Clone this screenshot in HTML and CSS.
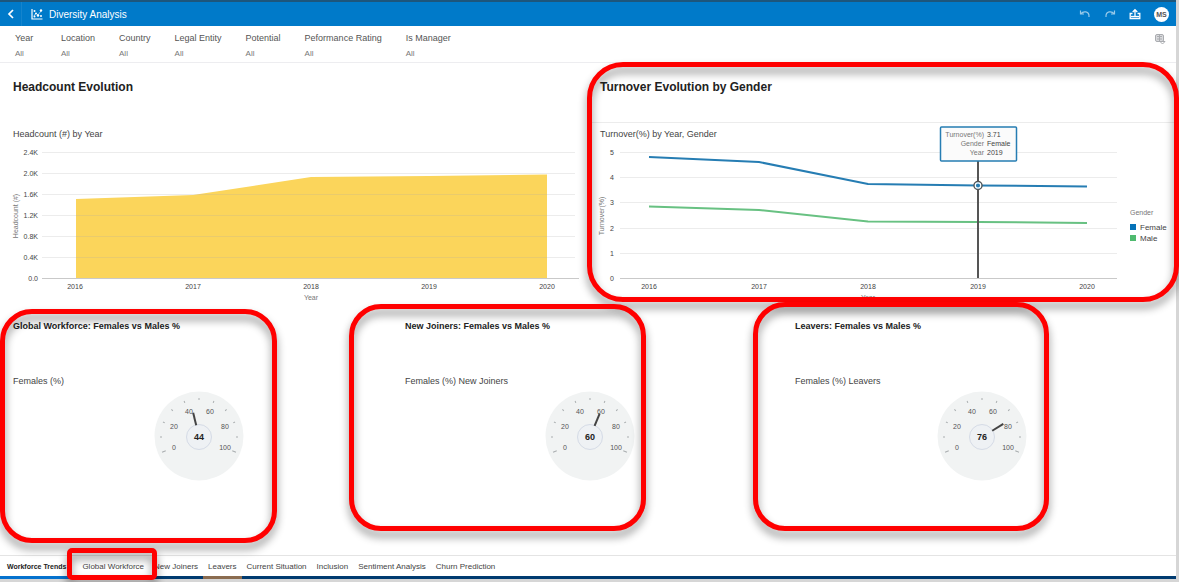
FILE: index.html
```html
<!DOCTYPE html>
<html lang="en">
<head>
<meta charset="utf-8">
<title>Diversity Analysis</title>
<link rel="stylesheet" href="styles.css">
</head>
<body>
<div class="app">
  <header class="topbar">
    <button class="icon-btn back" aria-label="Back">
      <svg width="8" height="10" viewBox="0 0 8 10" fill="none" stroke="#fff" stroke-width="1.7"><path d="M6 1 2 5l4 4"/></svg>
    </button>
    <svg class="logo" width="12" height="12" viewBox="0 0 12 12" fill="none" stroke="#fff" aria-hidden="true">
      <path d="M1 1v10h10.500" stroke-width="1.200"/><path d="m3 8 2-3 2 2 3-4" stroke-width=".6"/>
      <g fill="#fff" stroke="none"><circle cx="3.500" cy="3" r="1"/><circle cx="5" cy="5.500" r="1"/><circle cx="7" cy="7.500" r="1.200"/><circle cx="10" cy="2.500" r="1.200"/><circle cx="10" cy="8" r="1"/><circle cx="3.500" cy="8.500" r="1"/></g>
    </svg>
    <h1>Diversity Analysis</h1>
    <div class="actions">
      <button class="icon-btn dim" aria-label="Undo"><svg width="12" height="10" viewBox="0 0 12 10" fill="none" stroke="#fff" stroke-width="1.200"><path d="M1.500 1.500v3.500H5M1.800 4.800C4 2 10.500 1.500 10 8"/></svg></button>
      <button class="icon-btn dim" aria-label="Redo"><svg width="12" height="10" viewBox="0 0 12 10" fill="none" stroke="#fff" stroke-width="1.200"><path d="M10.500 1.500v3.500H7M10.200 4.800C8 2 1.500 1.500 2 8"/></svg></button>
      <button class="icon-btn" aria-label="Export"><svg width="12" height="12" viewBox="0 0 12 12" fill="none" stroke="#fff" stroke-width="1.300"><path d="M3.500 5.500H1.200v5h9.600v-5H8.500M6 8V2M3.700 4 6 1.700 8.300 4"/><path d="M2 8.500h8"/></svg></button>
      <button class="avatar" aria-label="Account">MS</button>
    </div>
  </header>

  <section class="filters" aria-label="Filters">
    <button class="filter">Year<span>All</span></button>
    <button class="filter">Location<span>All</span></button>
    <button class="filter">Country<span>All</span></button>
    <button class="filter">Legal Entity<span>All</span></button>
    <button class="filter">Potential<span>All</span></button>
    <button class="filter">Peformance Rating<span>All</span></button>
    <button class="filter">Is Manager<span>All</span></button>
    <button class="icon-btn filter-menu" aria-label="Filter options">
      <svg width="12" height="12" viewBox="0 0 12 12" fill="none" stroke="#aaacb0"><rect x="1.500" y="1.500" width="8" height="7" rx="1.500" fill="#d9dadd"/><path d="M3 3.500h5M3 6h5M5.500 2v6M6 8.500h5L8.500 11z"/></svg>
    </button>
  </section>

  <main>
    <div class="charts">
      <section class="panel">
        <h2>Headcount Evolution</h2>
        <h3 class="sub">Headcount (#) by Year</h3>
        <svg class="chart" viewBox="0 0 587 161" role="img" aria-label="Headcount by year">
          <path d="M76 135V55l117-4 118-18 118-1 118-1.500V135z" fill="#fbd55b"/>
          <path class="grid" d="M42 8.500h533M42 29.500h533M42 50.500h533M42 71.500h533M42 92.500h533M42 113.500h533"/>
          <path class="axis" d="M42 134.500h537"/>
          <g class="tick end">
            <text x="38" y="11">2.4K</text><text x="38" y="32">2.0K</text><text x="38" y="53">1.6K</text><text x="38" y="74">1.2K</text><text x="38" y="95">0.8K</text><text x="38" y="116">0.4K</text><text x="38" y="137">0.0</text>
          </g>
          <g class="tick">
            <text x="75" y="145">2016</text><text x="193" y="145">2017</text><text x="311" y="145">2018</text><text x="429" y="145">2019</text><text x="547" y="145">2020</text>
          </g>
          <g class="tick light"><text x="311" y="156">Year</text><text transform="translate(18 72) rotate(-90)">Headcount (#)</text></g>
        </svg>
      </section>

      <section class="panel ruled">
        <h2>Turnover Evolution by Gender</h2>
        <h3 class="sub">Turnover(%) by Year, Gender</h3>
        <svg class="chart" viewBox="0 0 589 161" role="img" aria-label="Turnover by year and gender">
          <path class="grid" d="M33 8.500h497M33 33.500h497M33 58.500h497M33 84.500h497M33 109.500h497"/>
          <path class="axis" d="M33 134.500h497"/>
          <path d="m62 62.500 110 3.500 109 11.500 110 .5 109 1" fill="none" stroke="#68c182" stroke-width="2"/>
          <path d="m62 13 110 5 109 22 110 1.500 109 1" fill="none" stroke="#267db3" stroke-width="2"/>
          <path d="M391 17v117" stroke="#555" stroke-width="2"/>
          <circle cx="391" cy="41.500" r="4" fill="#267db3" stroke="#555" stroke-width="1.500"/>
          <circle cx="391" cy="41.500" r="2.700" fill="#267db3" stroke="#fff" stroke-width="1.200"/>
          <rect x="353.500" y="-17" width="76" height="34" rx="1" fill="#fbfbfb" stroke="#267db3" stroke-width="1.500"/>
          <g class="tick end light"><text x="397" y="-7">Turnover(%)</text><text x="397" y="2">Gender</text><text x="397" y="11">Year</text></g>
          <g class="tick start"><text x="400" y="-7">3.71</text><text x="400" y="2">Female</text><text x="400" y="11">2019</text></g>
          <g class="tick end">
            <text x="27" y="11">5</text><text x="27" y="36">4</text><text x="27" y="61">3</text><text x="27" y="87">2</text><text x="27" y="112">1</text><text x="27" y="137">0</text>
          </g>
          <g class="tick">
            <text x="62" y="145">2016</text><text x="172" y="145">2017</text><text x="281" y="145">2018</text><text x="391" y="145">2019</text><text x="500" y="145">2020</text>
          </g>
          <g class="tick light"><text x="281" y="156">Year</text><text transform="translate(17 72) rotate(-90)">Turnover(%)</text></g>
          <rect x="543" y="80" width="6" height="6" fill="#0572b8"/><rect x="543" y="91" width="6" height="6" fill="#4fba6f"/>
          <g class="tick start light"><text x="543" y="71">Gender</text></g>
          <g class="legend"><text x="553" y="86">Female</text><text x="553" y="97">Male</text></g>
        </svg>
        <div class="mark mark-turnover"></div>
      </section>
    </div>

    <div class="gauges">
      <section class="panel">
        <h2 class="small">Global Workforce: Females vs Males %</h2>
        <h3 class="sub">Females (%)</h3>
        <svg class="gauge" width="90" height="90" viewBox="0 0 90 90" role="img" aria-label="44 percent">
          <g id="dial">
            <circle cx="45" cy="45" r="44.500" fill="#f1f3f3"/>
            <g stroke="#a9adaf">
              <path d="M45 6v4" transform="rotate(-112.500 45 46)"/>
              <path d="M45 7v2" transform="rotate(-90 45 46)"/>
              <path d="M45 7v2" transform="rotate(-67.500 45 46)"/>
              <path d="M45 7v2" transform="rotate(-45 45 46)"/>
              <path d="M45 7v2" transform="rotate(-22.500 45 46)"/>
              <path d="M45 7v2"/>
              <path d="M45 7v2" transform="rotate(22.500 45 46)"/>
              <path d="M45 7v2" transform="rotate(45 45 46)"/>
              <path d="M45 7v2" transform="rotate(67.500 45 46)"/>
              <path d="M45 7v2" transform="rotate(90 45 46)"/>
              <path d="M45 6v4" transform="rotate(112.500 45 46)"/>
            </g>
            <circle cx="45" cy="46" r="12.500" fill="#eef1f4" stroke="#d5dbe6"/>
            <g class="dial-label">
              <text x="20" y="59">0</text>
              <text x="20" y="38">20</text>
              <text x="35" y="23">40</text>
              <text x="56" y="23">60</text>
              <text x="71" y="38">80</text>
              <text x="71" y="59">100</text>
            </g>
          </g>
          <path class="needle" d="M45 34V21" transform="rotate(-13.500 45 46)"/>
          <text class="value" x="45" y="49">44</text>
        </svg>
        <div class="mark mark-workforce"></div>
      </section>
      <section class="panel">
        <h2 class="small">New Joiners: Females vs Males %</h2>
        <h3 class="sub">Females (%) New Joiners</h3>
        <svg class="gauge" width="90" height="90" viewBox="0 0 90 90" role="img" aria-label="60 percent">
          <use href="#dial"/>
          <path class="needle" d="M45 34V21" transform="rotate(22.500 45 46)"/>
          <text class="value" x="45" y="49">60</text>
        </svg>
        <div class="mark mark-joiners"></div>
      </section>
      <section class="panel">
        <h2 class="small">Leavers: Females vs Males %</h2>
        <h3 class="sub">Females (%) Leavers</h3>
        <svg class="gauge" width="90" height="90" viewBox="0 0 90 90" role="img" aria-label="76 percent">
          <use href="#dial"/>
          <path class="needle" d="M45 34V21" transform="rotate(58.500 45 46)"/>
          <text class="value" x="45" y="49">76</text>
        </svg>
        <div class="mark mark-leavers"></div>
      </section>
    </div>
  </main>

  <nav class="tabs" aria-label="Canvases">
    <button class="tab active">Workforce Trends</button>
    <div class="tab-slot"><button class="tab">Global Workforce</button><div class="mark mark-tab"></div></div>
    <button class="tab">New Joiners</button>
    <button class="tab flagged">Leavers</button>
    <button class="tab">Current Situation</button>
    <button class="tab">Inclusion</button>
    <button class="tab">Sentiment Analysis</button>
    <button class="tab">Churn Prediction</button>
  </nav>
</div>
</body>
</html>
```

FILE: styles.css
```css
* { box-sizing: border-box; }

body {
  margin: 0;
  background: #d6d6d6;
  color: #333;
  font-family: "Liberation Sans", Arial, sans-serif;
  font-size: 9px;
}

button {
  margin: 0;
  padding: 0;
  border: 0;
  background: none;
  color: inherit;
  font: inherit;
  cursor: pointer;
}

h1, h2, h3 { margin: 0; }

.app {
  display: flex;
  flex-direction: column;
  min-height: calc(100vh - 3px);
  margin: 0 3px 3px 0;
  background: #fff;
}

/* Header */
.topbar {
  display: flex;
  align-items: center;
  height: 26px;
  padding-right: 7px;
  border-top: 2px solid #1d567c;
  background: #007ac9;
  color: #fff;
}

.topbar h1 { margin-left: 6px; font-size: 10px; font-weight: 400; }

.icon-btn { display: flex; align-items: center; justify-content: center; }

.back {
  width: 22px;
  height: 100%;
  border-right: 1px solid #1484cd;
}

.logo { margin-left: 9px; }

.actions { display: flex; align-items: center; gap: 13px; margin-left: auto; }

.dim { opacity: 0.6; }

.avatar {
  width: 15px;
  height: 15px;
  border-radius: 50%;
  background: #fff;
  color: #555;
  font-size: 7px;
  font-weight: 700;
}

/* Filters */
.filters {
  display: flex;
  align-items: flex-start;
  gap: 24px;
  height: 37px;
  padding: 7px 10px 0 15px;
  border-bottom: 1px solid #ededf0;
}

.filter { min-width: 22px; color: #555; line-height: 11px; text-align: left; }

.filter span {
  display: block;
  margin-top: 4px;
  color: #777;
  font-size: 8px;
}

.filter-menu { margin-left: auto; }

/* Panels */
main { display: flex; flex: 1; flex-direction: column; }

.charts { display: grid; grid-template-columns: 587fr 589fr; }

.gauges { display: grid; flex: 1; grid-template-columns: 392fr 390fr 394fr; }

.panel { position: relative; min-width: 0; }

.panel h2 {
  height: 60px;
  padding: 16px 13px 0;
  color: #222;
  font-size: 12px;
  line-height: 16px;
}

.ruled h2 { border-bottom: 1px solid #ececec; }

.panel h2.small { height: 70px; padding-top: 15px; font-size: 9px; line-height: 12px; }

.sub {
  padding: 0 13px;
  color: #444;
  font-size: 9px;
  font-weight: 400;
  line-height: 12px;
}

.charts .sub { padding-top: 5px; padding-bottom: 4px; }

.chart { display: block; width: 100%; overflow: visible; }

.grid { fill: none; stroke: #aaa; stroke-opacity: 0.22; }

.axis { fill: none; stroke: #c9c9c9; }

.tick { fill: #444; font-size: 7px; text-anchor: middle; }

.end { text-anchor: end; }

.start { text-anchor: start; }

.light { fill: #777; }

.legend { fill: #444; font-size: 8px; }

/* Gauges */
.gauges .panel { padding: 0 0 73px; }

.gauge { display: block; margin: 4px auto 0; transform: translateX(3px); }

.dial-label { fill: #555; font-size: 7px; text-anchor: middle; }

.needle { stroke: #444; stroke-width: 2; }

.value { fill: #222; font-size: 9px; font-weight: 700; text-anchor: middle; }

/* Highlight frames */
.mark {
  position: absolute;
  z-index: 2;
  border: 5px solid #f00;
  border-radius: 32px;
  filter: drop-shadow(0 6px 4px rgba(0, 0, 0, 0.45));
  pointer-events: none;
}

.mark-turnover { inset: -1px -3px 3px 0; border-radius: 36px; }
.mark-workforce { inset: 4px 115px 12px 0; }
.mark-joiners { inset: -1px 136px 24px -43px; }
.mark-leavers { inset: -3px 127px 24px -29px; }
.mark-tab { inset: -8px -8px -4px -10px; border-radius: 5px; }

/* Canvas tabs */
.tabs {
  display: flex;
  height: 24px;
  border-top: 1px solid #e4e4e4;
  border-bottom: 3px solid #003b70;
}

.tab-slot { position: relative; display: flex; margin-left: 6px; }

.tab {
  margin-bottom: -3px;
  padding: 0 5px;
  border-bottom: 3px solid transparent;
  color: #444;
  font-size: 8px;
  white-space: nowrap;
}

.active {
  padding-left: 7px;
  border-bottom-color: #0572ce;
  color: #222;
  font-size: 7px;
  font-weight: 700;
}

.flagged { border-bottom-color: #8b6c50; }
```
